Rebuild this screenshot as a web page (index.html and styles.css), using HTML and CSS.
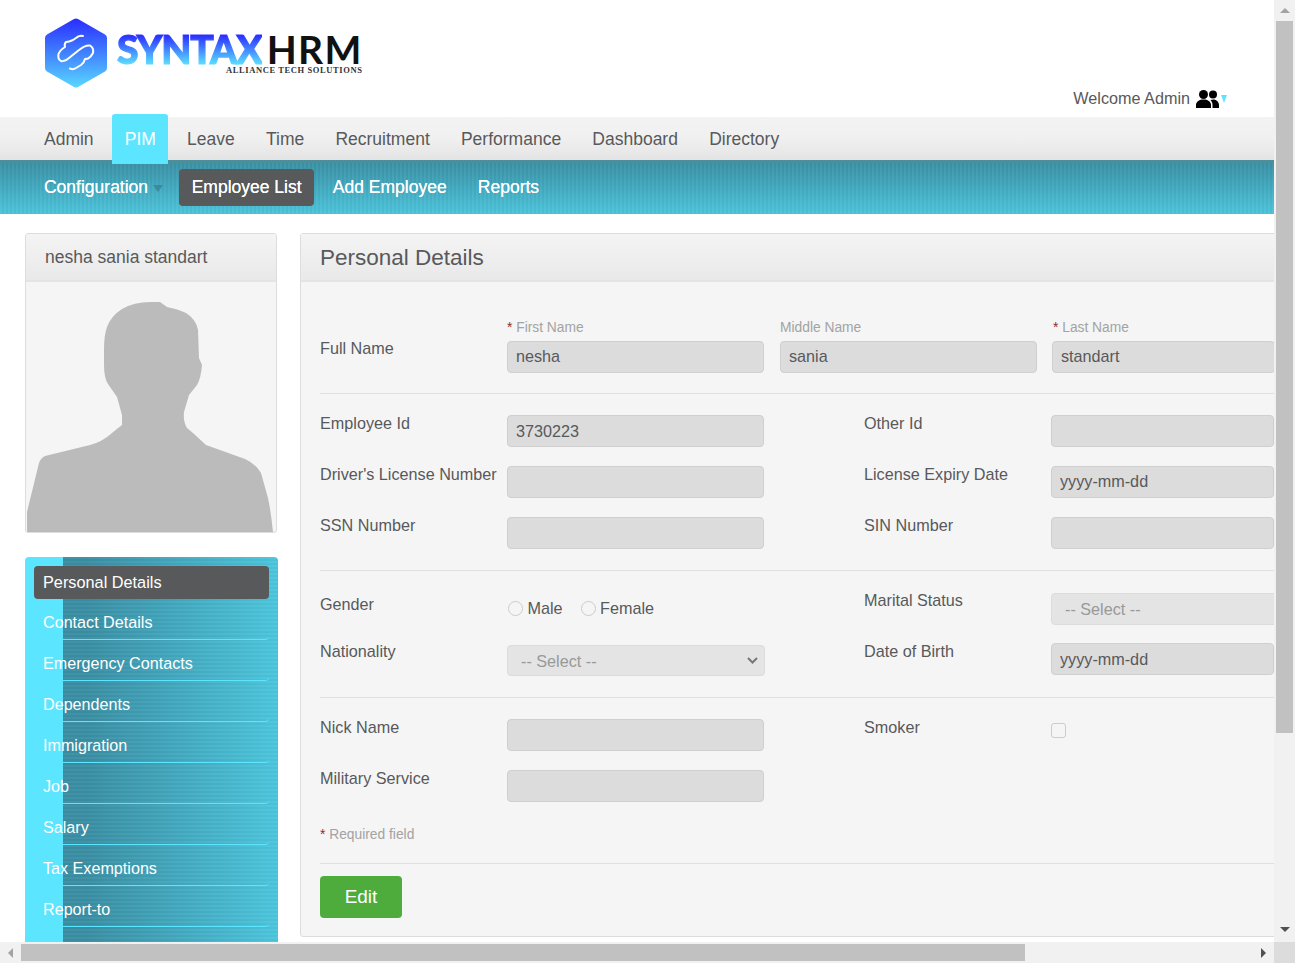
FILE: index.html
```html
<!DOCTYPE html>
<html lang="en">
<head>
<meta charset="utf-8">
<title>SyntaxHRM - Personal Details</title>
<link rel="stylesheet" href="styles.css">
</head>
<body>
<div class="window">
  <div class="viewport">
    <div class="page">
      <header class="top">
        <div class="logo">
          <svg class="logo-mark" viewBox="0 0 62 70" aria-hidden="true">
            <defs><linearGradient id="hex" x1="0" y1="0" x2="0" y2="1"><stop offset="0" stop-color="#2a2cff"/><stop offset="1" stop-color="#58d8ff"/></linearGradient></defs>
            <path d="M29 1 Q31 0 33 1 L60 16.500 Q62 17.500 62 20 L62 50 Q62 52.500 60 53.500 L33 69 Q31 70 29 69 L2 53.500 Q0 52.500 0 50 L0 20 Q0 17.500 2 16.500 Z" fill="url(#hex)"/>
            <path d="M38 18 Q34 17 31 20 L28 22 Q24 24 21 24 Q19 26 20 29 Q15 32 13.500 36 Q12.500 41 16 43 Q20 44 24 40 L34 32 Q40 27 45 27.500 Q49 30 48 35 Q46 39 43 40.500 Q41 41 40 41 Q39 45 36 47 L31 50 Q28 52 25 50.500" fill="none" stroke="#fff" stroke-width="2" stroke-linecap="round" stroke-linejoin="round"/>
          </svg>
          <div class="wordmark">
            <div class="word-line"><span class="word-syntax">SYNTAX</span><span class="word-hrm">HRM</span></div>
            <div class="word-tag">ALLIANCE TECH SOLUTIONS</div>
          </div>
        </div>
        <div class="welcome">
          <span>Welcome Admin</span>
          <svg class="people" viewBox="0 0 23 18" aria-hidden="true"><circle cx="7.500" cy="4.500" r="4.500"/><circle cx="17" cy="4.500" r="4"/><path d="M0 18 V15 C0 11.500 3.500 9.500 7.500 9.500 S15 11.500 15 15 V18 Z"/><path d="M16.500 18 V15 C16.500 13 15.800 11.500 14.500 10 C15.500 9.600 16.500 9.400 17.500 9.400 C20.500 9.400 23 11.900 23 15 V18 Z"/></svg>
          <span class="welcome-caret"></span>
        </div>
      </header>
      <nav class="menu">
        <a class="menu-item">Admin</a>
        <a class="menu-item menu-active">PIM</a>
        <a class="menu-item">Leave</a>
        <a class="menu-item">Time</a>
        <a class="menu-item">Recruitment</a>
        <a class="menu-item">Performance</a>
        <a class="menu-item">Dashboard</a>
        <a class="menu-item">Directory</a>
      </nav>
      <nav class="submenu">
        <a class="sub-item sub-config">Configuration<span class="sub-caret"></span></a>
        <a class="sub-item sub-active">Employee List</a>
        <a class="sub-item">Add Employee</a>
        <a class="sub-item">Reports</a>
      </nav>
      <div class="content">
        <aside class="side">
          <section class="card">
            <h2 class="card-name">nesha sania standart</h2>
            <div class="photo">
              <svg class="photo-svg" viewBox="26 282 250 250" aria-hidden="true"><path d="M27 532 L27 512 L38 467 Q39 459 45 456 L90 445 Q102 442 112 433 Q118 428 122 425 L122 415 L117 397 L108 384 Q104 378 104 365 L104 350 Q104 335 107 327 Q111 316 122 309 Q134 302 150 302 L160 302 L167 307 Q178 309 186 313 Q196 319 198 330 L199 358 L202 365 Q201 378 197 385 L189 395 L184 412 Q183 422 187 428 L193 433 L206 445 L245 459 Q256 464 261 473 L268 498 Q271 512 273 532 Z" fill="#bbbbbb"/></svg>
            </div>
          </section>
          <ul class="sidemenu">
            <li class="side-item side-active">Personal Details</li>
            <li class="side-item">Contact Details</li>
            <li class="side-item">Emergency Contacts</li>
            <li class="side-item">Dependents</li>
            <li class="side-item">Immigration</li>
            <li class="side-item">Job</li>
            <li class="side-item">Salary</li>
            <li class="side-item">Tax Exemptions</li>
            <li class="side-item">Report-to</li>
          </ul>
        </aside>
        <main class="panel">
          <h1 class="panel-title">Personal Details</h1>
          <form class="panel-body">
            <div class="names">
              <div class="lab names-lab">Full Name</div>
              <div class="field"><div class="small"><span class="req">*</span> First Name</div><input class="ctl" disabled value="nesha"></div>
              <div class="field"><div class="small">Middle Name</div><input class="ctl" disabled value="sania"></div>
              <div class="field"><div class="small small-last"><span class="req">*</span> Last Name</div><input class="ctl ctl-last" disabled value="standart"></div>
            </div>
            <hr class="rule rule-a">
            <div class="grid">
              <div class="lab">Employee Id</div><input class="ctl ctl-down" disabled value="3730223"><div class="lab col2">Other Id</div><input class="ctl" disabled>
              <div class="lab">Driver's License Number</div><input class="ctl" disabled><div class="lab col2">License Expiry Date</div><input class="ctl" disabled value="yyyy-mm-dd">
              <div class="lab">SSN Number</div><input class="ctl" disabled><div class="lab col2">SIN Number</div><input class="ctl" disabled>
            </div>
            <hr class="rule rule-b">
            <div class="grid grid-c">
              <div class="lab lab-gender">Gender</div>
              <div class="radios"><span class="radio"></span><span class="radio-text">Male</span><span class="radio"></span><span class="radio-text">Female</span></div>
              <div class="lab col2">Marital Status</div>
              <select class="ctl sel sel-wide" disabled><option>-- Select --</option></select>
              <div class="lab">Nationality</div>
              <div class="sel-wrap">
                <select class="ctl sel sel-nat" disabled><option>-- Select --</option></select>
                <svg class="chev" viewBox="0 0 11 7" aria-hidden="true"><path d="M1 1 L5.500 5.500 L10 1" fill="none" stroke="#777" stroke-width="2"/></svg>
              </div>
              <div class="lab col2">Date of Birth</div>
              <input class="ctl ctl-down" disabled value="yyyy-mm-dd">
            </div>
            <hr class="rule rule-c">
            <div class="grid">
              <div class="lab">Nick Name</div><input class="ctl" disabled><div class="lab col2">Smoker</div><span class="check"></span>
              <div class="lab">Military Service</div><input class="ctl" disabled>
            </div>
            <div class="required"><span class="req">*</span> Required field</div>
            <hr class="rule rule-d">
            <button class="edit" type="button">Edit</button>
          </form>
        </main>
      </div>
    </div>
  </div>
  <div class="vbar">
    <span class="arrow arrow-up"></span>
    <span class="vthumb"></span>
    <span class="arrow arrow-down"></span>
  </div>
  <div class="hbar">
    <span class="arrow arrow-left"></span>
    <span class="hthumb"></span>
    <span class="arrow arrow-right"></span>
  </div>
  <div class="corner"></div>
</div>
</body>
</html>
```
FILE: styles.css
```css
* { box-sizing: border-box; }
html, body { margin: 0; padding: 0; height: 100%; overflow: hidden; }
body { font-family: "Liberation Sans", Arial, sans-serif; color: #58595b; background: #fff; }

.window { display: grid; grid-template-columns: 1274px 21px; grid-template-rows: 942px 21px; width: 1295px; height: 963px; }
.viewport { overflow: hidden; background: #fff; }
.page { width: 1274px; }

/* scrollbars */
.vbar { display: flex; flex-direction: column; align-items: center; background: #f1f1f1; }
.hbar { display: flex; align-items: center; background: #f1f1f1; }
.corner { background: #dcdcdc; }
.vthumb { display: block; width: 17px; height: 712px; background: #c1c1c1; }
.hthumb { display: block; width: 1004px; height: 17px; background: #c1c1c1; }
.arrow { display: block; width: 0; height: 0; border-style: solid; border-color: transparent; }
.arrow-up { border-width: 0 5px 5px; border-bottom-color: #a3a3a3; margin: 8px 0 8px; }
.arrow-down { border-width: 5px 5px 0; border-top-color: #505050; margin-top: 194px; }
.arrow-left { border-width: 5px 5px 5px 0; border-right-color: #a3a3a3; margin: 0 8px; }
.arrow-right { border-width: 5px 0 5px 5px; border-left-color: #505050; margin-left: 236px; }

/* header */
.top { height: 117px; display: flex; justify-content: space-between; }
.logo { display: flex; padding: 18px 0 0 45px; }
.logo-mark { width: 62px; height: 70px; flex: none; }
.wordmark { margin-left: 10px; width: 250px; }
.word-line { display: flex; font-family: Lato, sans-serif; font-size: 39px; line-height: 40px; height: 40px; margin-top: 11px; }
.word-syntax { font-weight: 900; letter-spacing: -1.100px; -webkit-text-stroke: 1.200px transparent; background: linear-gradient(#2a2cff 15%, #58d8ff 85%); -webkit-background-clip: text; background-clip: text; color: transparent; }
.word-hrm { font-weight: 700; color: #111; margin-left: 5px; letter-spacing: 1.300px; }
.word-tag { font-family: "Liberation Serif", serif; font-weight: 700; font-size: 8.500px; line-height: 9px; letter-spacing: .6px; color: #333; margin: -3px 0 0 109px; white-space: nowrap; }
.welcome { display: flex; align-items: center; align-self: flex-start; margin: 89px 47px 0 0; font-size: 16.200px; line-height: 19px; }
.people { width: 23px; height: 18px; margin-left: 6px; fill: #000; }
.welcome-caret { width: 0; height: 0; margin: 0 0 0 2px; border-style: solid; border-width: 8px 3.500px 0; border-color: #5ce5ff transparent transparent; }

/* menus */
.menu { height: 43px; display: flex; gap: 6px; padding-left: 31.400px; background: linear-gradient(#f3f3f3 0%, #f0f0f0 50%, #e4e4e4 100%); }
.menu-item { padding: 0 12.600px; font-size: 17.500px; line-height: 44px; color: #58595b; white-space: nowrap; }
.menu-active { position: relative; z-index: 2; margin: -3px 0.500px -4px 0; padding-right: 12.100px; height: 50px; line-height: 50px; color: #fff; background: #5ce5ff; border-radius: 3px 3px 0 0; }
.submenu { height: 54px; display: flex; align-items: flex-start; gap: 6px; padding: 6px 0 0 31.400px; border-top: 3px solid #4b8f9c; background: repeating-linear-gradient(90deg, rgba(255,255,255,.035) 0 2px, rgba(0,0,0,.025) 2px 4px), linear-gradient(#3a91a5, #4cc4db); }
.sub-item { padding: 0 12.600px; height: 37px; font-size: 17.500px; line-height: 37px; color: #fff; white-space: nowrap; border-radius: 4px; text-shadow: 0 0 .6px #fff; }
.sub-config { display: flex; align-items: center; margin-right: 10px; padding-right: 0; }
.sub-caret { width: 0; height: 0; margin: 2px 0 0 5px; border-style: solid; border-width: 7px 5px 0; border-color: #3d8a9c transparent transparent; }
.sub-active { background: #58595b; }

/* layout */
.content { display: flex; gap: 22px; padding: 19px 0 0 25px; align-items: flex-start; }
.side { width: 253px; flex: none; }
.card { width: 252px; height: 300px; border: 1px solid #ddd; border-radius: 3px; background: #f5f5f5; overflow: hidden; }
.card-name { margin: 0; height: 48px; padding: 0 19px; font-weight: 400; font-size: 17.500px; line-height: 46px; color: #58595b; background: linear-gradient(#f4f4f4, #e9e9e9); border-bottom: 2px solid #e4e4e4; }
.photo { height: 250px; }
.photo-svg { display: block; width: 250px; height: 250px; }

.sidemenu { list-style: none; margin: 24px 0 0; padding: 9px; height: 410px; border-radius: 4px 4px 0 0; color: #fff; background: linear-gradient(90deg, #5ce5ff 0 38px, transparent 38px), repeating-linear-gradient(0deg, rgba(255,255,255,.035) 0 2px, rgba(0,0,0,.025) 2px 4px), linear-gradient(90deg, #3a8ea3 0 60px, #4cc6dd 100%); }
.side-item { height: 41px; padding-left: 9px; font-size: 16.150px; line-height: 47px; border-bottom: 1px solid #5ce5ff; border-radius: 0 0 4px 0; white-space: nowrap; }
.side-active { height: 33px; line-height: 33px; font-size: 16.300px; border: 0; border-radius: 4px; background: #58595b; }

.panel { width: 1000px; height: 704px; flex: none; border: 1px solid #ddd; border-radius: 3px; background: #f5f5f5; }
.panel-title { margin: 0; height: 48px; padding: 0 19px; font-weight: 400; font-size: 22.500px; line-height: 47px; color: #58595b; background: linear-gradient(#f4f4f4, #e9e9e9); border-bottom: 2px solid #e4e4e4; }
.panel-body { padding: 37px 0 0 19px; }

/* fields */
.lab { font-size: 16.200px; line-height: 17px; color: #58595b; white-space: nowrap; }
.small { font-size: 13.800px; line-height: 16px; color: #a3a3a3; margin: 1px 0 5px; white-space: nowrap; }
.req { color: #8e2b2b; }
.names { display: grid; grid-template-columns: 171px 257px 257px 222px; column-gap: 16px; width: 954px; }
.names-lab { align-self: center; margin-top: 4px; }
.field:last-child { margin-left: -1px; }
.small-last { margin-left: 1px; }
.grid { display: grid; grid-template-columns: 187px 257px 100px 187px 223px; row-gap: 19px; width: 954px; }
.grid-c { row-gap: 18px; }
.col2 { grid-column: 4; }
.ctl { display: block; width: 100%; height: 32px; padding: 0 8px 2px; font: 16.200px "Liberation Sans", Arial, sans-serif; color: #58595b; opacity: 1; background: #dcdcdc; border: 1px solid #cfcfcf; border-radius: 4px; outline: 0; -webkit-text-fill-color: #58595b; }
.ctl-last { width: 223px; }
.ctl-down { padding: 0 8px; }
.sel { padding: 0 9px; color: #999; background-color: #e4e4e4; border-color: #dcdcdc; -webkit-text-fill-color: #999; }
.sel-wide { width: 260px; margin-top: 1px; }
.sel-wrap { position: relative; margin-top: 2px; width: 258px; height: 31px; }
.sel-nat { height: 31px; padding-left: 13px; appearance: none; -webkit-appearance: none; }
.chev { position: absolute; left: 240px; top: 12px; width: 11px; height: 7px; }
.lab-gender { margin-top: 4px; }
.radios { display: flex; align-items: center; height: 16px; margin: 8px 0 0 1px; font-size: 16.200px; }
.radio { width: 15px; height: 15px; border: 1px solid #ccc; border-radius: 50%; background: #f5f5f5; margin-right: 4.500px; }
.radio-text { margin: 0 18px 0 0; }
.check { display: block; width: 15px; height: 15px; margin-top: 4px; border: 1px solid #ccc; border-radius: 3px; background: #f5f5f5; }
.required { font-size: 13.800px; line-height: 16px; color: #a3a3a3; margin-top: 25px; }
.rule { margin: 0; width: 954px; height: 1px; border: 0; background: #dfdfdf; }
.rule-a { margin-top: 20px; margin-bottom: 21px; }
.rule-b { margin-top: 21px; margin-bottom: 21px; }
.rule-c { margin-top: 21px; margin-bottom: 21px; }
.rule-d { margin-top: 20px; margin-bottom: 12px; }
.edit { display: block; width: 82px; height: 42px; padding: 0; border: 0; border-radius: 4px; background: #4eac3c; color: #fff; font: 19px "Liberation Sans", Arial, sans-serif; }
```
